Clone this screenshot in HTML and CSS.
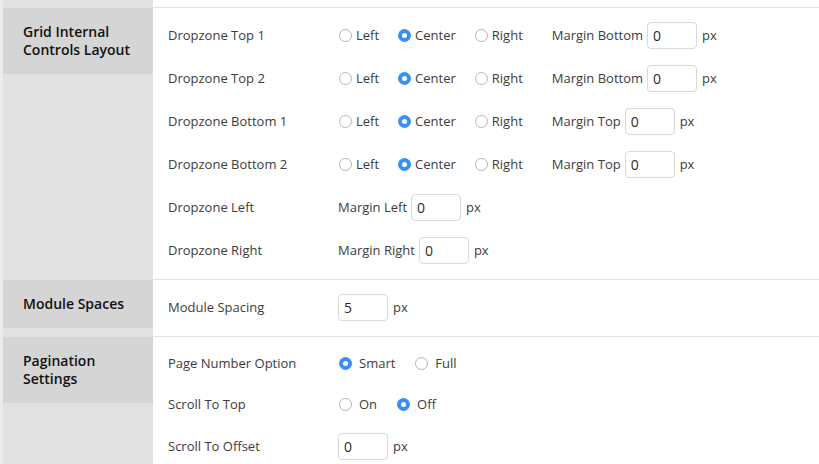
FILE: index.html
```html
<!DOCTYPE html>
<html>
<head>
<meta charset="utf-8">
<link rel="stylesheet" href="styles.css">
</head>
<body>
<div class="page">
  <div class="section stub"><div class="side"></div><div class="main"></div></div>

  <div class="section">
    <div class="side"><div class="title">Grid Internal Controls Layout</div></div>
    <div class="main">
      <div class="row">
        <div class="label">Dropzone Top 1</div>
        <div class="ctrl">
          <span class="opt"><span class="radio"></span>Left</span>
          <span class="opt"><span class="radio on"></span>Center</span>
          <span class="opt"><span class="radio"></span>Right</span>
          <span class="mfield after-radio">Margin Bottom<span class="inp mid">0</span>px</span>
        </div>
      </div>
      <div class="row">
        <div class="label">Dropzone Top 2</div>
        <div class="ctrl">
          <span class="opt"><span class="radio"></span>Left</span>
          <span class="opt"><span class="radio on"></span>Center</span>
          <span class="opt"><span class="radio"></span>Right</span>
          <span class="mfield after-radio">Margin Bottom<span class="inp mid">0</span>px</span>
        </div>
      </div>
      <div class="row">
        <div class="label">Dropzone Bottom 1</div>
        <div class="ctrl">
          <span class="opt"><span class="radio"></span>Left</span>
          <span class="opt"><span class="radio on"></span>Center</span>
          <span class="opt"><span class="radio"></span>Right</span>
          <span class="mfield after-radio">Margin Top<span class="inp mid">0</span>px</span>
        </div>
      </div>
      <div class="row">
        <div class="label">Dropzone Bottom 2</div>
        <div class="ctrl">
          <span class="opt"><span class="radio"></span>Left</span>
          <span class="opt"><span class="radio on"></span>Center</span>
          <span class="opt"><span class="radio"></span>Right</span>
          <span class="mfield after-radio">Margin Top<span class="inp mid">0</span>px</span>
        </div>
      </div>
      <div class="row">
        <div class="label">Dropzone Left</div>
        <div class="ctrl">
          <span class="mfield">Margin Left<span class="inp mid">0</span>px</span>
        </div>
      </div>
      <div class="row">
        <div class="label">Dropzone Right</div>
        <div class="ctrl">
          <span class="mfield">Margin Right<span class="inp mid">0</span>px</span>
        </div>
      </div>
    </div>
  </div>

  <div class="section">
    <div class="side"><div class="title">Module Spaces</div></div>
    <div class="main">
      <div class="row">
        <div class="label">Module Spacing</div>
        <div class="ctrl">
          <span class="mfield"><span class="inp">5</span>px</span>
        </div>
      </div>
    </div>
  </div>

  <div class="section">
    <div class="side"><div class="title">Pagination Settings</div></div>
    <div class="main">
      <div class="row">
        <div class="label">Page Number Option</div>
        <div class="ctrl">
          <span class="opt wide"><span class="radio on"></span>Smart</span>
          <span class="opt wide"><span class="radio"></span>Full</span>
        </div>
      </div>
      <div class="row">
        <div class="label">Scroll To Top</div>
        <div class="ctrl">
          <span class="opt wide"><span class="radio"></span>On</span>
          <span class="opt wide"><span class="radio on"></span>Off</span>
        </div>
      </div>
      <div class="row">
        <div class="label">Scroll To Offset</div>
        <div class="ctrl">
          <span class="mfield"><span class="inp">0</span>px</span>
        </div>
      </div>
    </div>
  </div>
</div>
</body>
</html>
```

FILE: styles.css
```css
html, body {
  margin: 0;
  padding: 0;
  background: #ffffff;
}

body {
  font-family: "Open Sans", "Liberation Sans", sans-serif;
  font-size: 13px;
  color: #3c3c3c;
  overflow: hidden;
}

.page {
  border-left: 3px solid #ebebeb;
  width: 816px;
}

.section {
  display: flex;
}

.side {
  width: 150px;
  flex: none;
  background: #e1e1e1;
  border-top: 1px solid #e1e1e1;
}

.main {
  flex: 1;
  background: #ffffff;
  border-top: 1px solid #e2e2e2;
  padding: 6px 0 7px 0;
}

.stub .side,
.stub .main {
  height: 7px;
  border-top: 0;
  padding: 0;
}

.title {
  background: #d5d5d5;
  padding: 15px 20px;
  font-size: 14px;
  line-height: 18px;
  font-weight: 600;
  color: #111111;
}

.row {
  display: flex;
  align-items: center;
  padding: 8px 0 8px 15px;
  line-height: 25px;
}

.label {
  width: 170px;
  flex: none;
}

.ctrl {
  display: flex;
  align-items: center;
}

.opt {
  display: inline-flex;
  align-items: center;
  margin-right: 18px;
}

.opt.wide {
  margin-right: 19px;
}

.radio {
  width: 13px;
  height: 13px;
  box-sizing: border-box;
  border: 1px solid #b5b5b5;
  border-radius: 50%;
  background: #ffffff;
  margin: 0 4px 0 1px;
  position: relative;
  flex: none;
}

.opt.wide .radio {
  margin-right: 7px;
}

.radio.on {
  background: #3a8ff2;
  border-color: #3a8ff2;
}

.radio.on::after {
  content: "";
  position: absolute;
  width: 5px;
  height: 5px;
  border-radius: 50%;
  background: #ffffff;
  left: 3px;
  top: 3px;
}

.mfield {
  display: inline-flex;
  align-items: center;
}

.mfield.after-radio {
  margin-left: 11px;
}

.inp {
  display: inline-block;
  box-sizing: border-box;
  width: 50px;
  height: 27px;
  line-height: 25px;
  border: 1px solid #d9d9d9;
  border-radius: 4px;
  padding: 0 5px;
  font-size: 14px;
  color: #2a2a2a;
  margin-right: 5px;
  background: #ffffff;
}

.inp.mid {
  margin-left: 4px;
}
```
